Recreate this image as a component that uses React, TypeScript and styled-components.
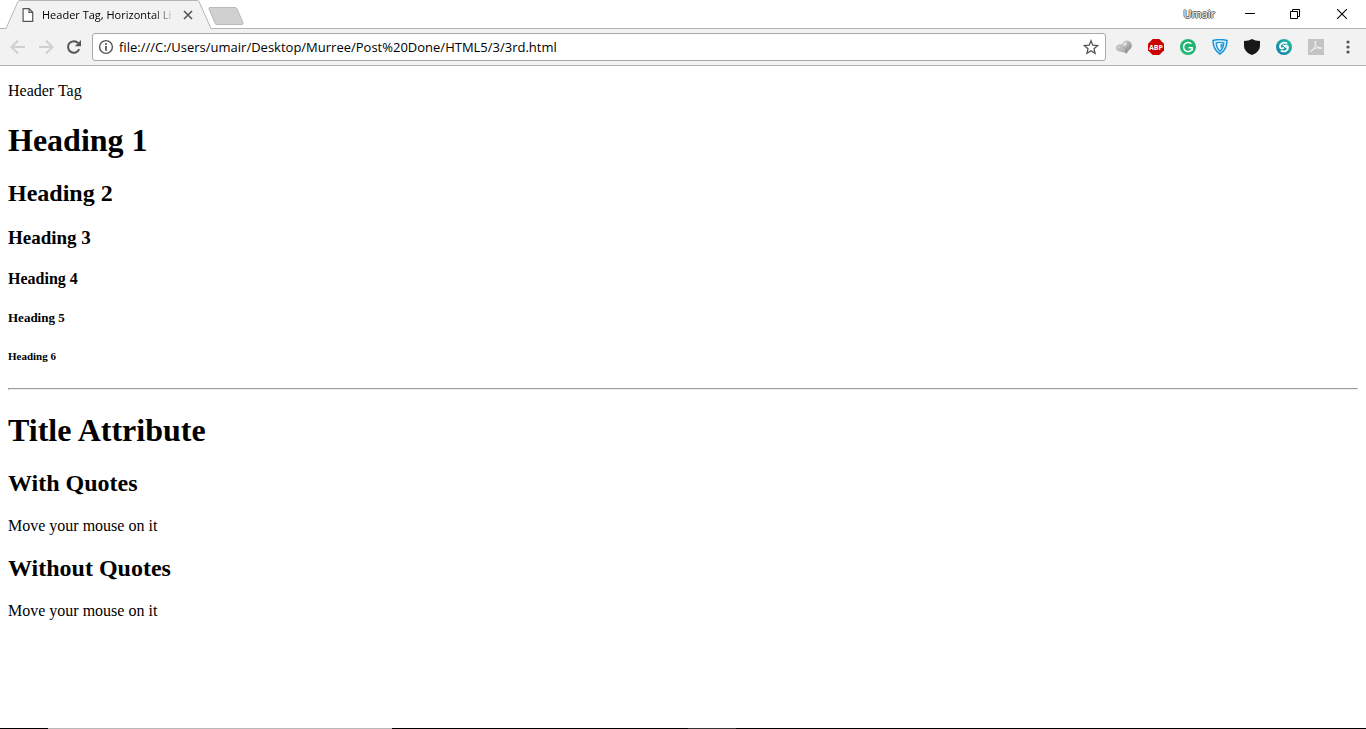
import React from "react";
import styled, { createGlobalStyle } from "styled-components";

const GlobalStyle = createGlobalStyle`
  body {
    margin: 0;
    background: #fff;
    color: #000;
  }
  * {
    box-sizing: border-box;
  }
`;

const Window = styled.div`
  display: flex;
  flex-direction: column;
  min-height: 100vh;
  font-family: "Open Sans", "Noto Sans", sans-serif;
`;

const TitleBar = styled.header`
  display: flex;
  height: 28px;
  padding-left: 6px;
`;

const Tab = styled.div`
  position: relative;
  display: flex;
  height: 29px;
  width: 205px;
`;

const TabEdge = styled.svg`
  display: block;
  flex: none;
  width: 14px;
  height: 29px;
`;

const TabBody = styled.div`
  display: flex;
  align-items: center;
  flex: 1;
  min-width: 0;
  padding-left: 2px;
  background: #f2f2f2;
  border-top: 1px solid #b5b4b5;
`;

const TabTitle = styled.span`
  flex: 1;
  min-width: 0;
  margin-left: 8px;
  overflow: hidden;
  white-space: nowrap;
  font-size: 11px;
  line-height: 16px;
  color: #000;
  mask-image: linear-gradient(to right, #000 112px, transparent 134px);
`;

const IconButton = styled.button<{ $width?: number }>`
  display: flex;
  align-items: center;
  justify-content: center;
  flex: none;
  width: ${({ $width = 28 }) => $width}px;
  height: 28px;
  padding: 0;
  border: 0;
  background: none;
`;

const NewTab = styled.button`
  display: flex;
  flex: none;
  align-self: flex-start;
  margin: 7px 0 0 -3px;
  padding: 0;
  border: 0;
  background: none;
`;

const WindowControls = styled.div`
  display: flex;
  align-items: center;
  margin-left: auto;
  height: 28px;
`;

const UserButton = styled.button`
  margin-right: 12px;
  padding: 0;
  border: 0;
  background: none;
  font-family: inherit;
  font-size: 11px;
  line-height: 16px;
  color: #fff;
  text-shadow: 1px 0 #555, -1px 0 #555, 0 1px #555, 0 -1px #555;
`;

const Toolbar = styled.nav`
  display: flex;
  align-items: center;
  height: 38px;
  padding: 0 2px 0 4px;
  background: #f2f2f2;
  border-top: 1px solid #b5b4b5;
  border-bottom: 1px solid #b5b4b5;
`;

const AddressBar = styled.label`
  display: flex;
  align-items: center;
  flex: 1;
  min-width: 0;
  height: 28px;
  margin: 0 2px 0 4px;
  padding-left: 5px;
  background: #fff;
  border: 1px solid #a9a9a9;
  border-radius: 3px;
`;

const AddressInput = styled.input`
  flex: 1;
  min-width: 0;
  margin-left: 5px;
  padding: 0;
  border: 0;
  outline: 0;
  background: none;
  font-family: inherit;
  font-size: 13px;
  line-height: 18px;
  color: #000;
`;

const Page = styled.main`
  flex: 1;
  padding: 0 8px;
  font-family: "Liberation Serif", "Times New Roman", serif;
`;

const Paragraph = styled.p`
  margin: 16px 0;
  font-size: 16px;
  line-height: 18px;
`;

const Heading1 = styled.h1`
  margin: 21px 0;
  font-size: 32px;
  line-height: 38px;
`;

const Heading2 = styled.h2`
  margin: 20px 0;
  font-size: 24px;
  line-height: 27px;
`;

const Heading3 = styled.h3`
  margin: 20px 0;
  font-size: 19px;
  line-height: 22px;
`;

const Heading4 = styled.h4`
  margin: 21px 0;
  font-size: 16px;
  line-height: 18px;
`;

const Heading5 = styled.h5`
  margin: 22px 0;
  font-size: 13px;
  line-height: 15px;
`;

const Heading6 = styled.h6`
  margin: 25px 0;
  font-size: 11px;
  line-height: 13px;
`;

const Rule = styled.hr`
  margin: 8px 0;
  border: 1px solid;
  border-color: #9a9a9a #eee #eee #9a9a9a;
`;

const TaskStrip = styled.footer`
  display: flex;
  height: 1px;
  background: #000;
`;

const StripSegment = styled.span<{ $width: number; $gap: number; $color: string }>`
  width: ${({ $width }) => $width}px;
  margin-left: ${({ $gap }) => $gap}px;
  background: ${({ $color }) => $color};
`;

const PageIcon = () => (
  <svg width="12" height="14" viewBox="0 0 12 14" fill="#fff" stroke="#555" strokeWidth="1.2">
    <path d="M1.1.7h6l3.6 3.6v9H1.1z" />
    <path d="M7 .7v3.7h3.7" fill="none" />
  </svg>
);

const CloseTabIcon = () => (
  <svg width="10" height="10" viewBox="0 0 10 10" stroke="#555" strokeWidth="1.6">
    <path d="M1 1l8 8M9 1L1 9" />
  </svg>
);

const ArrowIcon = ({ forward = false }: { forward?: boolean }) => (
  <svg width="16" height="16" viewBox="0 0 16 16" fill="none" stroke="#d0d0d0" strokeWidth="2">
    <path d={forward ? "M1 8h13M8 1.5L14.5 8 8 14.5" : "M15 8H2M8 1.5L1.5 8 8 14.5"} />
  </svg>
);

const ReloadIcon = () => (
  <svg width="16" height="16" viewBox="0 0 16 16">
    <path d="M13.2 10.2A5.8 5.8 0 1 1 12.2 4.1" fill="none" stroke="#555" strokeWidth="2" />
    <path d="M15 1v6.2H8.8z" fill="#555" />
  </svg>
);

const InfoIcon = () => (
  <svg width="16" height="16" viewBox="0 0 16 16">
    <circle cx="8" cy="8" r="6.4" fill="none" stroke="#555" strokeWidth="1.4" />
    <path d="M7.1 4.2h1.8V6H7.1zM7.1 7.1h1.8v4.7H7.1z" fill="#555" />
  </svg>
);

const StarIcon = () => (
  <svg width="16" height="16" viewBox="0 0 16 16" fill="none" stroke="#555" strokeWidth="1.3">
    <path d="M8 1.8l1.8 4.4 4.8.4-3.6 3.1 1.1 4.6L8 11.8l-4.1 2.5L5 9.7 1.4 6.6l4.8-.4z" />
  </svg>
);

const GlobesIcon = () => (
  <svg width="16" height="16" viewBox="0 0 16 16">
    <defs>
      <linearGradient id="globe" x1="0" y1="0" x2="1" y2="1">
        <stop offset="0" stopColor="#dcdcdc" />
        <stop offset="1" stopColor="#858585" />
      </linearGradient>
    </defs>
    <ellipse cx="4.5" cy="9" rx="4.5" ry="3.8" fill="#bdbdbd" />
    <path d="M4 12.5l6 1.5.8-3z" fill="#aaa" />
    <circle cx="10.8" cy="6.5" r="5" fill="url(#globe)" />
    <path d="M8 10.5l2.2 4.5 3.2-4.5z" fill="#969696" />
    <path d="M7.2 5.5l2.2-2.3 1.5 1.6-2.2 2.4z" fill="#e8e8e8" />
    <path d="M1.5 8.5l2-1.500 1 1-2 1.500z" fill="#d6d6d6" />
  </svg>
);

const AdblockIcon = () => (
  <svg width="16" height="16" viewBox="0 0 16 16">
    <path d="M4.7 0h6.6L16 4.7v6.6L11.3 16H4.7L0 11.3V4.7z" fill="#c90000" />
    <text
      x="8"
      y="11"
      textAnchor="middle"
      fill="#fff"
      fontFamily="Open Sans, sans-serif"
      fontSize="7"
      fontWeight="700"
    >
      ABP
    </text>
  </svg>
);

const GrammarIcon = () => (
  <svg width="16" height="16" viewBox="0 0 16 16">
    <circle cx="8" cy="8" r="8" fill="#1fb673" />
    <path d="M11.4 4.7A4.6 4.6 0 1 0 12.2 10.2" fill="none" stroke="#fff" strokeWidth="1.5" />
    <path d="M8.5 8.7h4M12.2 8v3.5" fill="none" stroke="#fff" strokeWidth="1.4" />
  </svg>
);

const VpnShieldIcon = () => (
  <svg width="16" height="16" viewBox="0 0 16 16" fill="none">
    <path
      d="M1 1.5Q8-.3 15 1.5C15 7.5 12.6 12 8 15 3.4 12 1 7.5 1 1.5z"
      fill="#d9effb"
      stroke="#1c94d8"
      strokeWidth="1.5"
    />
    <path
      d="M4.3 4Q8 2.8 11.7 4c-.1 3.3-1.3 6-3.7 8.2C5.6 10 4.4 7.3 4.3 4z"
      fill="#fff"
      stroke="#1c94d8"
      strokeWidth="1.4"
    />
    <path d="M8.5 5h2.2c-.3 2-1 3.6-2.2 5z" fill="#1c94d8" />
  </svg>
);

const BlackShieldIcon = () => (
  <svg width="16" height="16" viewBox="0 0 16 16">
    <path
      d="M8 0C10 1.3 13 2 16 2v4.5c0 4.5-3.2 7.8-8 9.5-4.8-1.7-8-5-8-9.5V2c3 0 6-.7 8-2z"
      fill="#17181a"
    />
  </svg>
);

const SwirlIcon = () => (
  <svg width="16" height="16" viewBox="0 0 16 16">
    <defs>
      <linearGradient id="swirl" x1="0" y1="1" x2="1" y2="0">
        <stop offset="0" stopColor="#1678ad" />
        <stop offset="1" stopColor="#1fbfa0" />
      </linearGradient>
    </defs>
    <circle cx="8" cy="8" r="8" fill="url(#swirl)" />
    <path
      d="M10.6 4C7 2.6 3.8 4.8 4 7.8c.2 1.8 2 2.200 3.200 1.200M5.400 12c3.600 1.400 6.800-.8 6.600-3.800-.2-1.800-2-2.200-3.200-1.200"
      fill="none"
      stroke="#fff"
      strokeWidth="1.8"
      strokeLinecap="round"
    />
    <path d="M6.800 5.600l4 3.400" fill="none" stroke="#fff" strokeWidth="1.2" />
  </svg>
);

const PdfIcon = () => (
  <svg width="16" height="16" viewBox="0 0 16 16">
    <path d="M0 0h16v16H0z" fill="#c4c4c4" />
    <path
      d="M3 12.5c1.9-.8 4.500-5 4.800-9.300.1-1.200-1.300-1-1 .3.7 3.400 3.300 6 6.200 6.100 1.200 0 1-1.100-.4-1.100-3.700 0-7.300 1.200-9.200 2.900-.8.7-1.200 1.300-.4 1.100z"
      fill="none"
      stroke="#f4f4f4"
      strokeWidth="1"
    />
  </svg>
);

const MenuIcon = () => (
  <svg width="4" height="14" viewBox="0 0 4 14" fill="#555">
    <circle cx="2" cy="2" r="1.6" />
    <circle cx="2" cy="7" r="1.6" />
    <circle cx="2" cy="12" r="1.6" />
  </svg>
);

const extensions = [
  { name: "Globes", Icon: GlobesIcon },
  { name: "Adblock Plus", Icon: AdblockIcon },
  { name: "Grammar", Icon: GrammarIcon },
  { name: "VPN", Icon: VpnShieldIcon },
  { name: "Shield", Icon: BlackShieldIcon },
  { name: "Sync", Icon: SwirlIcon },
  { name: "PDF", Icon: PdfIcon },
];

export default function App() {
  return (
    <Window>
      <GlobalStyle />
      <TitleBar>
        <Tab>
          <TabEdge viewBox="0 0 14 29">
            <path d="M0 29L12.5 1.5Q13 .5 14 .5V29z" fill="#f2f2f2" />
            <path d="M0 28.5L12 1.5Q12.5.5 14 .5" fill="none" stroke="#b5b4b5" />
          </TabEdge>
          <TabBody>
            <PageIcon />
            <TabTitle>Header Tag, Horizontal Li</TabTitle>
            <IconButton $width={18} aria-label="Close tab">
              <CloseTabIcon />
            </IconButton>
          </TabBody>
          <TabEdge viewBox="0 0 14 29">
            <path d="M0 .5Q1 .5 1.5 1.5L14 29H0z" fill="#f2f2f2" />
            <path d="M0 .5Q1.5.5 2 1.5L14 28.5" fill="none" stroke="#b5b4b5" />
          </TabEdge>
        </Tab>
        <NewTab aria-label="New tab">
          <svg width="36" height="18" viewBox="0 0 36 18">
            <path
              d="M2 .5h25q1.5 0 2 1.5l6 13.5q.5 2-1 2H9q-1.5 0-2-1.5L1 2Q.5.5 2 .5z"
              fill="#d0d0d0"
              stroke="#b9b9b9"
            />
          </svg>
        </NewTab>
        <WindowControls>
          <UserButton>Umair</UserButton>
          <IconButton $width={46} aria-label="Minimize">
            <svg width="10" height="10" viewBox="0 0 10 10" stroke="#000">
              <path d="M0 4.5h10" />
            </svg>
          </IconButton>
          <IconButton $width={44} aria-label="Restore">
            <svg width="10" height="10" viewBox="0 0 10 10" fill="none" stroke="#000">
              <path d="M.5 2.5h7v7h-7zM2.5 2.5v-2h7v7h-2" />
            </svg>
          </IconButton>
          <IconButton $width={49} aria-label="Close">
            <svg width="10" height="10" viewBox="0 0 10 10" stroke="#000" strokeWidth="1.1">
              <path d="M0 0l10 10M10 0L0 10" />
            </svg>
          </IconButton>
        </WindowControls>
      </TitleBar>

      <Toolbar>
        <IconButton aria-label="Back">
          <ArrowIcon />
        </IconButton>
        <IconButton aria-label="Forward">
          <ArrowIcon forward />
        </IconButton>
        <IconButton aria-label="Reload">
          <ReloadIcon />
        </IconButton>
        <AddressBar>
          <InfoIcon />
          <AddressInput
            aria-label="Address"
            defaultValue="file:///C:/Users/umair/Desktop/Murree/Post%20Done/HTML5/3/3rd.html"
          />
          <IconButton aria-label="Bookmark this page">
            <StarIcon />
          </IconButton>
        </AddressBar>
        {extensions.map(({ name, Icon }) => (
          <IconButton key={name} $width={32} aria-label={name}>
            <Icon />
          </IconButton>
        ))}
        <IconButton $width={32} aria-label="Menu">
          <MenuIcon />
        </IconButton>
      </Toolbar>

      <Page>
        <Paragraph>Header Tag</Paragraph>
        <Heading1>Heading 1</Heading1>
        <Heading2>Heading 2</Heading2>
        <Heading3>Heading 3</Heading3>
        <Heading4>Heading 4</Heading4>
        <Heading5>Heading 5</Heading5>
        <Heading6>Heading 6</Heading6>
        <Rule />
        <Heading1>Title Attribute</Heading1>
        <Heading2>With Quotes</Heading2>
        <Paragraph>Move your mouse on it</Paragraph>
        <Heading2>Without Quotes</Heading2>
        <Paragraph>Move your mouse on it</Paragraph>
      </Page>

      <TaskStrip>
        <StripSegment $gap={48} $width={344} $color="#b8b8b8" />
        <StripSegment $gap={296} $width={48} $color="#333" />
      </TaskStrip>
    </Window>
  );
}
